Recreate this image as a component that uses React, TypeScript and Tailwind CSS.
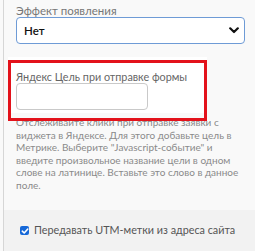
import React from "react";

export default function App() {
  return (
    <div
      className="relative w-[255px] h-[251px] overflow-hidden bg-[#f9f9f9]"
      style={{ fontFamily: 'Lato, "Open Sans", sans-serif' }}
    >
      <div className="ml-[3px] h-full border-l border-[#d6d6d6] flex flex-col">
        {/* Top section */}
        <div className="pt-[4px] pl-[12px] pb-[13px]">
          <div className="text-[11.5px] leading-[13px] text-[#777] whitespace-nowrap">Эффект появления</div>
          <div className="w-[229px] h-[27px] rounded-[4px] border border-[#6e9bd6] bg-white flex items-center justify-between pl-[7px] pr-[5px]">
            <span className="text-[11.5px] font-semibold text-[#111]">Нет</span>
            <svg width="10" height="7" viewBox="0 0 10 7">
              <path d="M1.2 1.3 L5 5 L8.8 1.3" fill="none" stroke="#111" strokeWidth="2.2" strokeLinecap="round" strokeLinejoin="round" />
            </svg>
          </div>
        </div>
        {/* Yandex goal section */}
        <div className="ml-[4px] w-[199px] bg-white pl-[8px] pt-[13px] pb-[3px]">
          <div className="text-[10.8px] leading-[13px] text-[#666] whitespace-nowrap">Яндекс Цель при отправке формы</div>
          <div className="w-[132px] h-[27px] rounded-[4px] border border-[#c9c9c9] bg-white" />
        </div>
        {/* Help text */}
        <div className="pl-[12px] pt-[3px] text-[10px] leading-[12.5px] text-[#8a8a8a] whitespace-nowrap">
          Отслеживайте клики при отправке заявки с<br />
          виджета в Яндексе. Для этого добавьте цель в<br />
          Метрике. Выберите "Javascript-событие" и<br />
          введите произвольное название цели в одном<br />
          слове на латинице. Вставьте это слово в данное<br />
          поле.
        </div>
        {/* Checkbox section */}
        <div className="mt-auto h-[41px] bg-[#f2f2f2] flex items-center pl-[16px] gap-[5px]">
          <div className="w-[9px] h-[9px] rounded-[2px] bg-[#1668d8] flex items-center justify-center">
            <svg width="8" height="8" viewBox="0 0 8 8">
              <path d="M1.3 4.2 L3.2 6 L6.8 2" fill="none" stroke="#fff" strokeWidth="1.6" strokeLinecap="round" strokeLinejoin="round" />
            </svg>
          </div>
          <span className="text-[10.8px] text-[#555] whitespace-nowrap">Передавать UTM-метки из адреса сайта</span>
        </div>
      </div>
      {/* Red annotation box */}
      <div className="absolute left-[8px] top-[60px] w-[199px] h-[61px] border-[3px] border-[#e3121b]" />
    </div>
  );
}
